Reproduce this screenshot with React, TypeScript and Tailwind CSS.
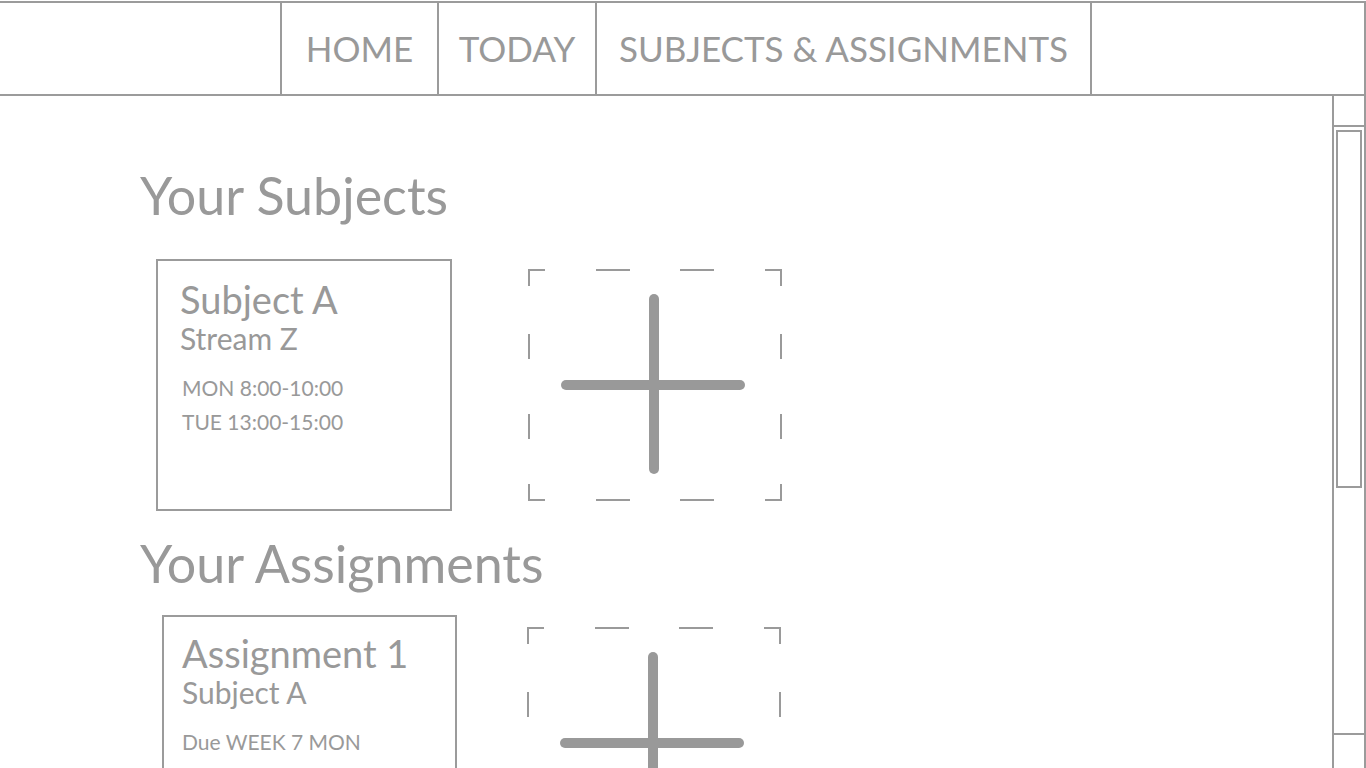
const font = { fontFamily: "Lato, 'Liberation Sans', sans-serif" };

function AddBox({ className = "" }: { className?: string }) {
  return (
    <div className={"w-[254px] h-[232px] shrink-0 " + className}>
      <svg width="254" height="232" viewBox="0 0 254 232" fill="none">
        <g stroke="#9a9a9a" strokeWidth="2">
          <path d="M1 17V1H17" />
          <path d="M237 1H253V17" />
          <path d="M1 215V231H17" />
          <path d="M237 231H253V215" />
          <path d="M68 1H102M152 1H186" />
          <path d="M68 231H102M152 231H186" />
          <path d="M1 65V90M1 145V170" />
          <path d="M253 65V90M253 145V170" />
        </g>
        <g stroke="#999999" strokeWidth="10" strokeLinecap="round">
          <path d="M126 30V200" />
          <path d="M38 116H212" />
        </g>
      </svg>
    </div>
  );
}

function NavItem({ label, w }: { label: string; w: string }) {
  return (
    <div className={"flex items-center justify-center border-l-2 border-[#9b9b9b] text-[35px] leading-none text-[#999] " + w}>
      <span>{label}</span>
    </div>
  );
}

export default function App() {
  return (
    <div className="h-[768px] w-[1366px] overflow-hidden bg-white flex flex-col" style={font}>
      <nav className="mt-px h-[95px] shrink-0 flex border-t-2 border-b-2 border-r-2 border-[#9b9b9b]">
        <div className="w-[280px]" />
        <NavItem label="HOME" w="w-[157px]" />
        <NavItem label="TODAY" w="w-[158px]" />
        <NavItem label="SUBJECTS & ASSIGNMENTS" w="w-[495px]" />
        <div className="flex-1 border-l-2 border-[#9b9b9b]" />
      </nav>

      <div className="flex flex-1 min-h-0">
        <main className="flex-1 pl-[140px] pt-[73px] text-[#999]">
          <h1 className="text-[52px] leading-none">Your Subjects</h1>

          <div className="mt-[38px] flex items-start">
            <div className="ml-[16px] w-[296px] h-[252px] border-2 border-[#9b9b9b] pl-[22px] pt-[16px]">
              <div className="text-[38px] leading-[44px]">Subject A</div>
              <div className="text-[30px] leading-[34px]">Stream Z</div>
              <div className="mt-[16px] ml-[2px] text-[21px] leading-[34px]">
                <div>MON 8:00-10:00</div>
                <div>TUE 13:00-15:00</div>
              </div>
            </div>
            <AddBox className="ml-[76px] mt-[10px]" />
          </div>

          <h2 className="mt-[26px] text-[52px] leading-none">Your Assignments</h2>

          <div className="mt-[26px] flex items-start">
            <div className="ml-[22px] w-[295px] h-[252px] border-2 border-[#9b9b9b] pl-[18px] pt-[14px]">
              <div className="text-[38px] leading-[44px]">Assignment 1</div>
              <div className="text-[30px] leading-[34px]">Subject A</div>
              <div className="mt-[16px] text-[21px] leading-[34px]">Due WEEK 7 MON</div>
            </div>
            <AddBox className="ml-[70px] mt-[12px]" />
          </div>
        </main>

        <div className="w-[34px] shrink-0 flex flex-col border-l-2 border-r-2 border-[#9b9b9b]">
          <div className="h-[31px] border-b-2 border-[#9b9b9b]" />
          <div className="mx-[2px] mt-[3px] h-[358px] border-2 border-[#9b9b9b]" />
          <div className="flex-1" />
          <div className="h-[35px] border-t-2 border-[#9b9b9b]" />
        </div>
      </div>
    </div>
  );
}
